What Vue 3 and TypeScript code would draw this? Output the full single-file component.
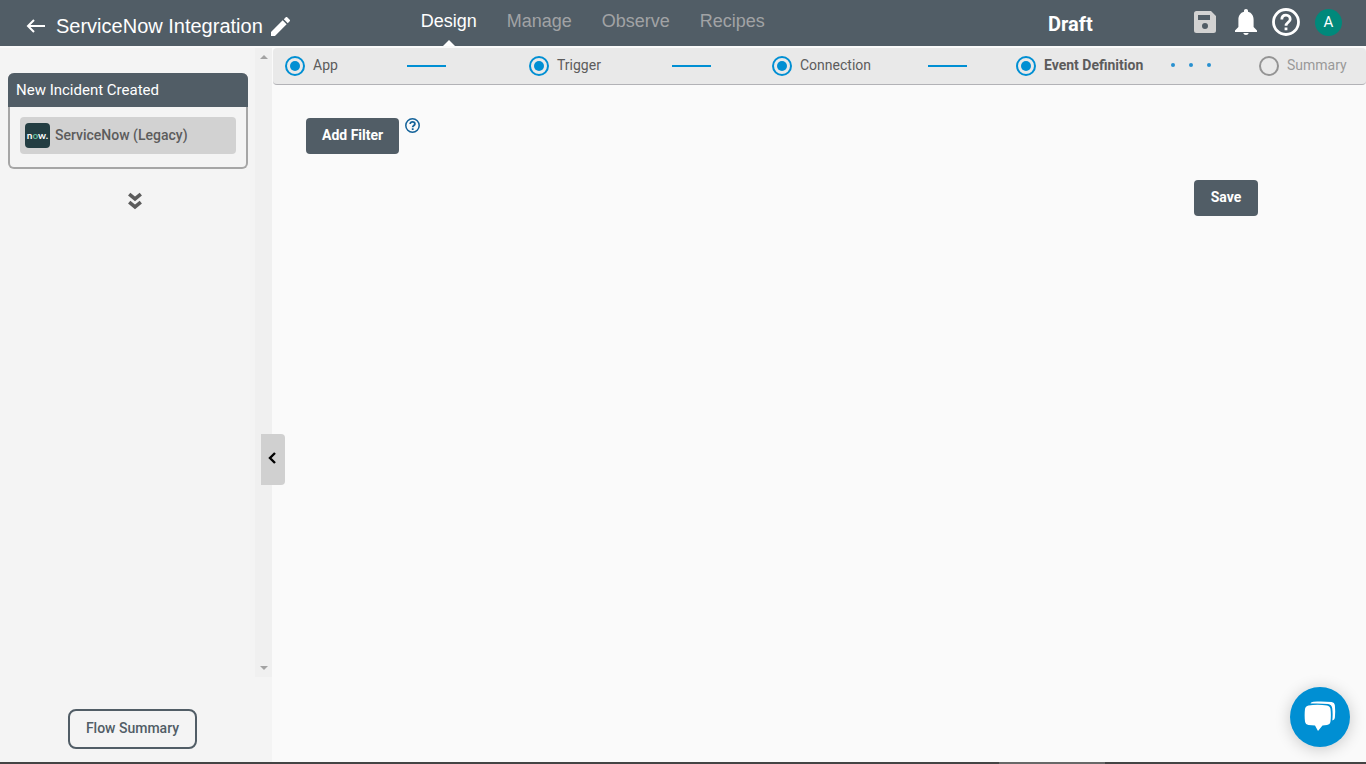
<script setup lang="ts">
import { ref } from 'vue'

type StepState = 'done' | 'current' | 'pending'
interface Step {
  label: string
  state: StepState
  link?: 'line' | 'dots'
}

const tabs: string[] = ['Design', 'Manage', 'Observe', 'Recipes']
const activeTab = ref('Design')

const steps: Step[] = [
  { label: 'App', state: 'done', link: 'line' },
  { label: 'Trigger', state: 'done', link: 'line' },
  { label: 'Connection', state: 'done', link: 'line' },
  { label: 'Event Definition', state: 'current', link: 'dots' },
  { label: 'Summary', state: 'pending' },
]
</script>

<template>
  <div class="page">
    <header class="topbar">
      <div class="title-group">
        <button class="icon-btn" aria-label="Back">
          <svg width="22" height="14" viewBox="0 0 22 14" fill="none" stroke="#fff" stroke-width="2"><path d="M19 7H2M8 1L2 7l6 6" /></svg>
        </button>
        <h1>ServiceNow Integration</h1>
        <button class="icon-btn" aria-label="Rename">
          <svg width="19" height="19" viewBox="3 3 18 18" fill="#fff"><path d="M3 17.25V21h3.75L17.81 9.94l-3.75-3.75L3 17.25zM20.71 7.04a1 1 0 0 0 0-1.41l-2.34-2.34a1 1 0 0 0-1.41 0l-1.83 1.83 3.75 3.75 1.83-1.83z" /></svg>
        </button>
      </div>
      <nav class="tabs">
        <a v-for="t in tabs" :key="t" href="#" :class="{ active: t === activeTab }" @click.prevent="activeTab = t">{{ t }}</a>
      </nav>
      <strong class="status">Draft</strong>
      <div class="actions">
        <button class="icon-btn" aria-label="Save flow">
          <svg width="22" height="22" viewBox="0 0 22 22"><path fill="#d2d2d2" fill-rule="evenodd" d="M2.500 0H17l5 5v14.500a2.500 2.500 0 0 1-2.500 2.500h-17A2.500 2.500 0 0 1 0 19.500v-17A2.500 2.500 0 0 1 2.500 0zM4 4v5h12V4zM11 12a3 3 0 1 0 0 6 3 3 0 0 0 0-6z" /></svg>
        </button>
        <button class="icon-btn" aria-label="Notifications">
          <svg width="26" height="26" viewBox="-4 0 26 26" fill="#fff"><path d="M11 0c1.300 0 2 .8 2 2v.8c3.800 1 5.600 4 5.600 8v7.200L22 21.500V23H0v-1.500L3.400 18v-7.200c0-4 1.800-7 5.600-8V2c0-1.200.7-2 2-2zM8.300 24h5.400c-.3 1.300-1.300 2-2.700 2s-2.400-.7-2.700-2z" /></svg>
        </button>
        <button class="icon-btn" aria-label="Help">
          <svg width="28" height="28" viewBox="0 0 28 28" fill="none" stroke="#fff" stroke-width="2.800"><circle cx="14" cy="14" r="12.500" /><path d="M9.800 11.500c0-2.700 1.700-4.300 4.200-4.300s4.200 1.700 4.200 4c0 3-4.200 3.200-4.200 6.600M14 19.500v2.800" /></svg>
        </button>
        <button class="avatar" aria-label="Account">A</button>
      </div>
    </header>

    <div class="body">
      <aside class="sidebar">
        <div class="flow-area">
          <div class="flow-list">
            <section class="card">
              <h2>New Incident Created</h2>
              <div class="card-body">
                <button class="app-row">
                  <span class="logo">n<i>o</i>w.</span>
                  <span class="app-name">ServiceNow (Legacy)</span>
                </button>
              </div>
            </section>
            <svg class="more" width="14" height="18" viewBox="0 0 14 18" fill="none" stroke="#5c5c5c" stroke-width="3.600"><path d="M1.200 2.200L7 7l5.800-4.800M1.200 10.200L7 15l5.800-4.800" /></svg>
          </div>
          <div class="gutter">
            <svg width="8" height="4" viewBox="0 0 8 4" fill="#a3a3a3"><path d="M0 4L4 0l4 4z" /></svg>
            <svg width="8" height="4" viewBox="0 0 8 4" fill="#a3a3a3"><path d="M0 0h8L4 4z" /></svg>
          </div>
        </div>
        <div class="side-foot">
          <button class="outline-btn">Flow Summary</button>
        </div>
        <button class="collapse" aria-label="Collapse panel">
          <svg width="8" height="12" viewBox="0 0 8 12" fill="none" stroke="#000" stroke-width="2.400"><path d="M7 1L2 6l5 5" /></svg>
        </button>
      </aside>

      <main class="content">
        <div class="stepper">
          <template v-for="s in steps" :key="s.label">
            <a href="#" class="step" :class="s.state" @click.prevent>
              <span class="marker"></span><span class="step-label">{{ s.label }}</span>
            </a>
            <span v-if="s.link === 'line'" class="line"></span>
            <span v-else-if="s.link === 'dots'" class="dots"><i></i><i></i><i></i></span>
          </template>
        </div>
        <div class="editor">
          <div class="filter-row">
            <button class="solid-btn">Add Filter</button>
            <button class="icon-btn" aria-label="Filter help">
              <svg width="15" height="15" viewBox="0 0 15 15" fill="none" stroke="#14639a"><circle cx="7.500" cy="7.500" r="6.700" stroke-width="1.500" /><path stroke-width="1.800" d="M5.200 6c0-1.400 1-2.200 2.300-2.200s2.400.8 2.400 2.100c0 1.500-2.200 1.600-2.200 3.300M7.700 10.200v1.800" /></svg>
            </button>
          </div>
          <div class="save-row"><button class="solid-btn">Save</button></div>
        </div>
      </main>
    </div>

    <div class="bottom-edge"><span></span></div>
    <button class="chat" aria-label="Open chat">
      <svg width="32" height="32" viewBox="0 0 32 32" fill="#fff"><path d="M4.500 4.500C10 3.600 17 3.600 23 4.500c2 .3 3.300 1.600 3.500 3.600.5 4 .5 8.500 0 12.500-.2 2-1.500 3.200-3.500 3.400l-4.500.4L14 30l-3-5.600-6.500-.4C2.500 23.800 1.300 22.600 1 20.600c-.5-4-.5-8.500 0-12.500.3-2 1.500-3.300 3.500-3.600z" /><path d="M6.500 2.600C7 1.200 8 .9 9.500.8c6-.5 12-.4 18 .3 2 .3 3.200 1.500 3.400 3.500.4 4 .4 8 0 12-.2 1.600-1 2.600-2.600 3 .5-4 .5-8-.1-12.500-.4-2.400-1.700-3.700-4.200-4-5.700-.7-11.500-.8-17.500-.5z" /></svg>
    </button>
  </div>
</template>

<style>
body { margin: 0; }
</style>

<style scoped>
* { box-sizing: border-box; }
.page {
  display: flex;
  flex-direction: column;
  min-height: 100vh;
  background: #fafafa;
  color: #5c5c5c;
  font: 14px/20px Roboto, "Open Sans", sans-serif;
}
button { font: inherit; color: inherit; border: 0; padding: 0; background: none; cursor: pointer; }
a { color: inherit; text-decoration: none; }
svg { display: block; }

.topbar {
  display: grid;
  grid-template-columns: 421fr 628fr 146fr auto;
  align-items: center;
  height: 46px;
  padding-right: 24px;
  background: #515d66;
  color: #fff;
}
.title-group { display: flex; align-items: center; gap: 8px; padding: 6px 0 0 26px; }
h1 { margin: 0; font: 400 20px/24px "Liberation Sans", Arial, sans-serif; }
.tabs { display: flex; align-self: stretch; gap: 30px; font: 18px/42px "Liberation Sans", Arial, sans-serif; color: #a1a3a5; }
.tabs a { position: relative; }
.tabs .active { color: #fff; }
.tabs .active::after {
  content: "";
  position: absolute;
  left: 50%;
  bottom: 0;
  margin-left: -6px;
  border: 6px solid transparent;
  border-top: 0;
  border-bottom-color: #fff;
}
.status { padding-top: 2px; font-size: 20px; font-weight: 700; }
.actions { display: flex; align-items: center; gap: 15px; padding-bottom: 2px; }
.avatar { width: 27px; height: 27px; border-radius: 50%; background: #00897b; font-size: 15px; }

.body { display: flex; flex: 1; padding-top: 2px; }
.sidebar { position: relative; display: flex; flex-direction: column; flex: 0 0 272px; background: #f4f4f4; }
.flow-area { display: flex; flex: 1; }
.flow-list { flex: 1; padding: 25px 7px 0 8px; }
.gutter {
  display: flex;
  flex-direction: column;
  align-items: center;
  justify-content: space-between;
  width: 17px;
  padding: 7px 0;
  background: #f0f0f0;
}
.card { border: 2px solid #a6a6a6; border-top: 0; border-radius: 6px; }
h2 {
  margin: 0 -2px;
  padding: 0 8px;
  border-radius: 6px 6px 0 0;
  background: #515d66;
  color: #fff;
  font-size: 15px;
  font-weight: 400;
  line-height: 34px;
}
.card-body { padding: 10px 10px 13px; }
.app-row {
  display: flex;
  align-items: center;
  gap: 5px;
  width: 100%;
  height: 37px;
  padding: 0 5px;
  border-radius: 4px;
  background: #d2d2d2;
  font-weight: 500;
}
.app-name, .step-label { padding-bottom: 2px; }
.logo {
  width: 25px;
  border-radius: 4px;
  background: #233d42;
  color: #fff;
  font: 700 10px/25px Lato, sans-serif;
  text-align: center;
}
.logo i { color: #62b99a; font-style: normal; }
.more { margin: 23px auto 0 120px; }
.side-foot { display: flex; justify-content: center; height: 85px; padding: 32px 7px 0 0; }
.outline-btn { height: 40px; padding: 0 16px 2px; border: 2px solid #515d66; border-radius: 8px; font-weight: 500; color: #515d66; }
.collapse {
  position: absolute;
  top: 54%;
  right: -13px;
  display: flex;
  align-items: center;
  justify-content: center;
  width: 24px;
  height: 51px;
  padding: 0 2px 2px 0;
  border-radius: 0 4px 4px 0;
  background: #d0d0d0;
}

.content { flex: 1; min-width: 0; padding-left: 1px; }
.stepper {
  display: grid;
  grid-template-columns: 122fr 122fr 143fr 100fr 156fr 88fr 155fr 88fr 107fr;
  align-items: center;
  height: 37px;
  padding-left: 12px;
  border-bottom: 1px solid #b2b2b6;
  border-radius: 4px;
  background: #e9e9e9;
}
.step { display: flex; align-items: center; gap: 8px; white-space: nowrap; }
.marker { width: 20px; height: 20px; border: 2px solid #008fd3; border-radius: 50%; padding: 3px; background: #008fd3 content-box; }
.current { font-weight: 700; }
.pending { color: #999; }
.pending .marker { border-color: #949494; background: none; }
.line { width: 39px; height: 2px; background: #008fd3; }
.dots { display: flex; gap: 14px; padding-bottom: 2px; }
.dots i { width: 4px; height: 4px; border-radius: 50%; background: #2890d0; }

.editor { padding: 33px 108px 0 33px; }
.filter-row { display: flex; align-items: flex-start; gap: 6px; }
.filter-row .icon-btn { line-height: 0; padding-bottom: 2px; }
.solid-btn { min-width: 64px; height: 36px; padding: 0 16px 2px; border-radius: 4px; background: #515d66; color: #fff; font-weight: 700; }
.save-row { display: flex; justify-content: flex-end; padding-top: 26px; }

.bottom-edge { display: grid; grid-template-columns: 999fr 106fr 261fr; height: 2px; background: #444; }
.bottom-edge span { grid-column: 2; background: #686868; }
.chat {
  position: fixed;
  right: 16px;
  bottom: 17px;
  display: flex;
  align-items: center;
  justify-content: center;
  width: 60px;
  height: 60px;
  border-radius: 50%;
  background: #008fd3;
  box-shadow: 0 2px 16px rgba(0, 0, 0, 0.2);
}
</style>
